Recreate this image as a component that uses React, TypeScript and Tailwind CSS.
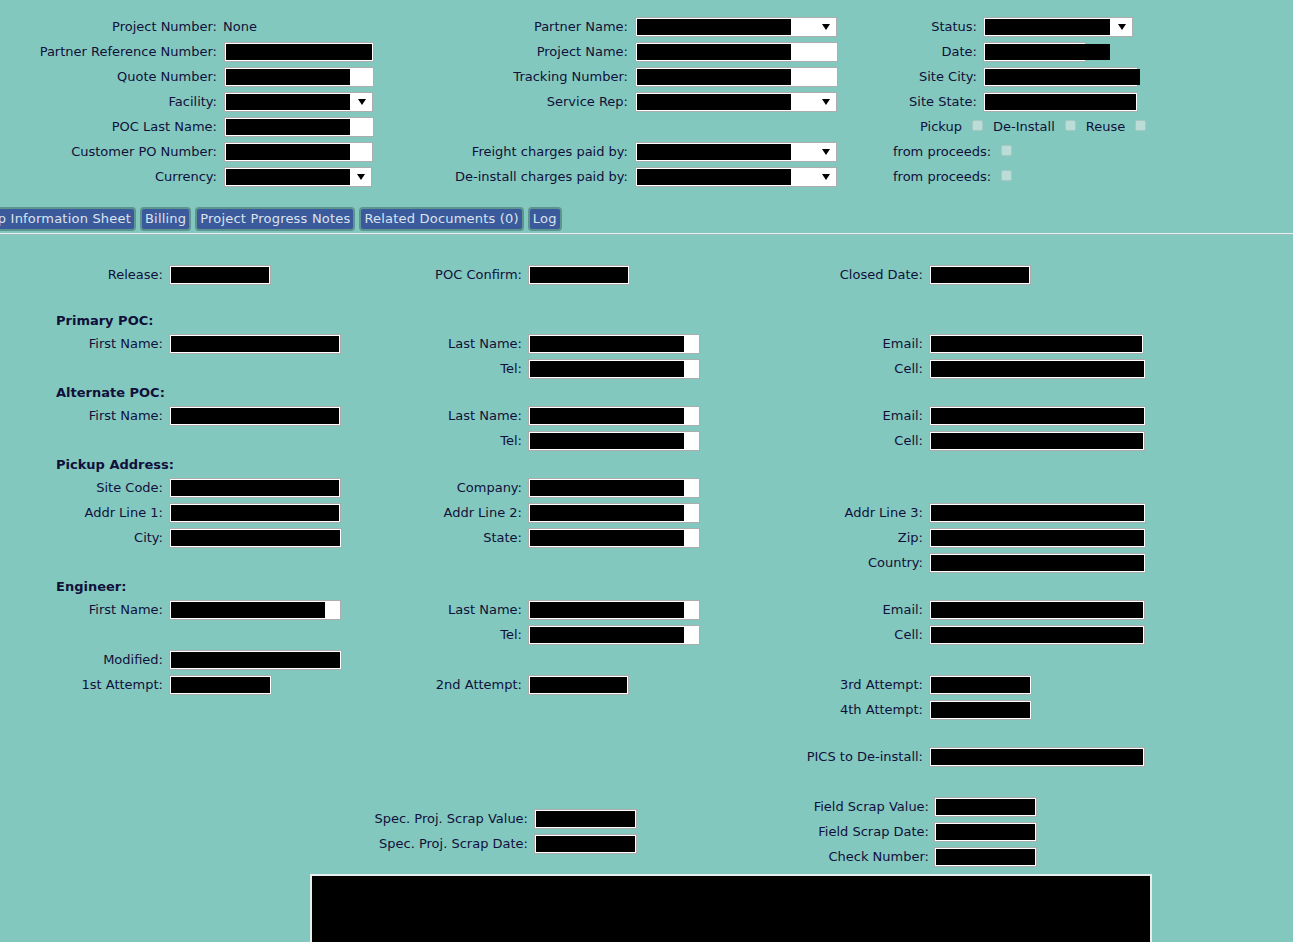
import React from "react";

// redacted form input: gray border, white inset, black block
function Field({ w, b, sel }: { w: string; b?: string; sel?: boolean }) {
  return (
    <div className={`flex h-[20px] items-center border border-[#adadad] bg-white p-px ${w}`}>
      <div className={`h-full shrink-0 bg-black ${b ?? "flex-1"}`} />
      {sel && (
        <svg className="ml-auto mr-[5px] shrink-0" width="8" height="6" viewBox="0 0 8 6">
          <path d="M0 0h8L4 6z" fill="#000" />
        </svg>
      )}
    </div>
  );
}

function Check() {
  return <span className="mb-[3px] inline-block h-[11px] w-[11px] shrink-0 rounded-[2px] border border-[#a4c8c4] bg-[#bcdcd8]" />;
}

const lbl = "shrink-0 whitespace-nowrap text-right";

function TopRow({
  l1, f1, l2, f2, l3, f3, c3, h = "h-[25px]",
}: {
  l1?: string; f1?: React.ReactNode; l2?: string; f2?: React.ReactNode; l3?: string; f3?: React.ReactNode; c3?: React.ReactNode; h?: string;
}) {
  return (
    <div className={`flex items-center ${h}`}>
      <div className={`${lbl} w-[217px]`}>{l1}</div>
      <div className="w-[231px] shrink-0 pl-[7px]">{f1}</div>
      <div className={`${lbl} w-[180px]`}>{l2}</div>
      <div className="w-[252px] shrink-0 pl-[7px]">{f2}</div>
      {c3 ? (
        c3
      ) : (
        <>
          <div className={`${lbl} w-[97px]`}>{l3}</div>
          <div className="pl-[6px]">{f3}</div>
        </>
      )}
    </div>
  );
}

function Row({
  la, fa, lb, fb, lc, fc,
}: {
  la?: string; fa?: React.ReactNode; lb?: string; fb?: React.ReactNode; lc?: string; fc?: React.ReactNode;
}) {
  return (
    <div className="flex h-[25px] items-center">
      <div className={`${lbl} w-[163px]`}>{la}</div>
      <div className="w-[197px] shrink-0 pl-[6px]">{fa}</div>
      <div className={`${lbl} w-[162px]`}>{lb}</div>
      <div className="w-[198px] shrink-0 pl-[6px]">{fb}</div>
      <div className={`${lbl} w-[203px]`}>{lc}</div>
      <div className="pl-[6px]">{fc}</div>
    </div>
  );
}

function Heading({ children }: { children: string }) {
  return <div className="flex h-[22px] items-center pl-[56px] pt-[2px] font-bold">{children}</div>;
}

function Tab({ children }: { children: string }) {
  return (
    <div className="flex h-[24px] shrink-0 items-center whitespace-nowrap rounded-[4px] border-2 border-[#5e9590] bg-[#3a5a9b] px-[3px] tracking-[0.2px] text-[#dde3ef]">
      {children}
    </div>
  );
}

function ScrapRow({ label, lw, gap }: { label: string; lw: string; gap: string }) {
  return (
    <div className="flex h-[25px] items-center">
      <div className={`${lbl} ${lw}`}>{label}</div>
      <div className={gap}>
        <Field w="w-[103px]" />
      </div>
    </div>
  );
}

export default function App() {
  return (
    <div className="h-screen overflow-hidden bg-[#83c8bf] font-['DejaVu_Sans','Verdana',sans-serif] text-[13px] text-[#10103a]">
      {/* header fields */}
      <div className="pt-[15px]">
        <TopRow
          h="h-[24px]"
          l1="Project Number:"
          f1={<span className="-ml-[1px]">None</span>}
          l2="Partner Name:"
          f2={<Field w="w-[202px]" b="w-[154px]" sel />}
          l3="Status:"
          f3={<Field w="w-[150px]" b="w-[125px]" sel />}
        />
        <TopRow
          l1="Partner Reference Number:"
          f1={<Field w="w-[150px]" />}
          l2="Project Name:"
          f2={<Field w="w-[203px]" b="w-[154px]" />}
          l3="Date:"
          f3={<Field w="w-[103px]" b="w-[125px]" />}
        />
        <TopRow
          l1="Quote Number:"
          f1={<Field w="w-[150px]" b="w-[124px]" />}
          l2="Tracking Number:"
          f2={<Field w="w-[203px]" b="w-[154px]" />}
          l3="Site City:"
          f3={<Field w="w-[155px]" b="w-[155px]" />}
        />
        <TopRow
          l1="Facility:"
          f1={<Field w="w-[149px]" b="w-[124px]" sel />}
          l2="Service Rep:"
          f2={<Field w="w-[202px]" b="w-[154px]" sel />}
          l3="Site State:"
          f3={<Field w="w-[155px]" />}
        />
        <TopRow
          l1="POC Last Name:"
          f1={<Field w="w-[150px]" b="w-[124px]" />}
          c3={
            <div className="flex items-center gap-[10px] pl-[40px]">
              <span>Pickup</span>
              <Check />
              <span>De-Install</span>
              <Check />
              <span>Reuse</span>
              <Check />
            </div>
          }
        />
        <TopRow
          l1="Customer PO Number:"
          f1={<Field w="w-[149px]" b="w-[124px]" />}
          l2="Freight charges paid by:"
          f2={<Field w="w-[202px]" b="w-[154px]" sel />}
          c3={
            <div className="flex items-center gap-[10px] pl-[13px]">
              <span>from proceeds:</span>
              <Check />
            </div>
          }
        />
        <TopRow
          l1="Currency:"
          f1={<Field w="w-[148px]" b="w-[124px]" sel />}
          l2="De-install charges paid by:"
          f2={<Field w="w-[202px]" b="w-[154px]" sel />}
          c3={
            <div className="flex items-center gap-[10px] pl-[13px]">
              <span>from proceeds:</span>
              <Check />
            </div>
          }
        />
      </div>

      {/* tabs */}
      <div className="mt-[18px] flex items-center gap-[4px]">
        <div className="flex w-[136px] shrink-0 justify-end overflow-hidden">
          <Tab>Site Pickup Information Sheet</Tab>
        </div>
        <Tab>Billing</Tab>
        <Tab>Project Progress Notes</Tab>
        <Tab>Related Documents (0)</Tab>
        <Tab>Log</Tab>
      </div>
      <div className="mt-[2px] h-px bg-[#e9efee]" />
      <div className="h-px bg-[#9cbcb8]" />

      {/* detail fields */}
      <div className="pt-[27px]">
        <Row
          la="Release:"
          fa={<Field w="w-[102px]" />}
          lb="POC Confirm:"
          fb={<Field w="w-[102px]" />}
          lc="Closed Date:"
          fc={<Field w="w-[102px]" />}
        />
        <div className="h-[22px]" />
        <Heading>Primary POC:</Heading>
        <Row
          la="First Name:"
          fa={<Field w="w-[172px]" />}
          lb="Last Name:"
          fb={<Field w="w-[172px]" b="w-[154px]" />}
          lc="Email:"
          fc={<Field w="w-[215px]" />}
        />
        <Row lb="Tel:" fb={<Field w="w-[172px]" b="w-[154px]" />} lc="Cell:" fc={<Field w="w-[217px]" />} />
        <Heading>Alternate POC:</Heading>
        <Row
          la="First Name:"
          fa={<Field w="w-[172px]" />}
          lb="Last Name:"
          fb={<Field w="w-[172px]" b="w-[154px]" />}
          lc="Email:"
          fc={<Field w="w-[217px]" />}
        />
        <Row lb="Tel:" fb={<Field w="w-[172px]" b="w-[154px]" />} lc="Cell:" fc={<Field w="w-[216px]" />} />
        <Heading>Pickup Address:</Heading>
        <Row la="Site Code:" fa={<Field w="w-[172px]" />} lb="Company:" fb={<Field w="w-[172px]" b="w-[154px]" />} />
        <Row
          la="Addr Line 1:"
          fa={<Field w="w-[172px]" />}
          lb="Addr Line 2:"
          fb={<Field w="w-[172px]" b="w-[154px]" />}
          lc="Addr Line 3:"
          fc={<Field w="w-[217px]" />}
        />
        <Row
          la="City:"
          fa={<Field w="w-[173px]" />}
          lb="State:"
          fb={<Field w="w-[172px]" b="w-[154px]" />}
          lc="Zip:"
          fc={<Field w="w-[217px]" />}
        />
        <Row lc="Country:" fc={<Field w="w-[217px]" />} />
        <Heading>Engineer:</Heading>
        <Row
          la="First Name:"
          fa={<Field w="w-[172px]" b="w-[154px]" />}
          lb="Last Name:"
          fb={<Field w="w-[172px]" b="w-[154px]" />}
          lc="Email:"
          fc={<Field w="w-[216px]" />}
        />
        <Row lb="Tel:" fb={<Field w="w-[172px]" b="w-[154px]" />} lc="Cell:" fc={<Field w="w-[216px]" />} />
        <Row la="Modified:" fa={<Field w="w-[173px]" />} />
        <Row
          la="1st Attempt:"
          fa={<Field w="w-[103px]" />}
          lb="2nd Attempt:"
          fb={<Field w="w-[101px]" />}
          lc="3rd Attempt:"
          fc={<Field w="w-[103px]" />}
        />
        <Row lc="4th Attempt:" fc={<Field w="w-[103px]" />} />
        <div className="h-[22px]" />
        <Row lc="PICS to De-install:" fc={<Field w="w-[216px]" />} />
        <div className="h-[25px]" />

        {/* scrap values */}
        <div className="flex h-[75px]">
          <div className="w-[360px] shrink-0" />
          <div className="flex w-[360px] shrink-0 flex-col justify-center">
            <ScrapRow label="Spec. Proj. Scrap Value:" lw="w-[168px]" gap="pl-[6px]" />
            <ScrapRow label="Spec. Proj. Scrap Date:" lw="w-[168px]" gap="pl-[6px]" />
          </div>
          <div className="flex flex-col justify-center">
            <ScrapRow label="Field Scrap Value:" lw="w-[209px]" gap="pl-[5px]" />
            <ScrapRow label="Field Scrap Date:" lw="w-[209px]" gap="pl-[5px]" />
            <ScrapRow label="Check Number:" lw="w-[209px]" gap="pl-[5px]" />
          </div>
        </div>

        <div className="ml-[310px] mt-[5px] h-[120px] w-[842px] border-2 border-[#e8eeee] bg-black" />
      </div>
    </div>
  );
}
